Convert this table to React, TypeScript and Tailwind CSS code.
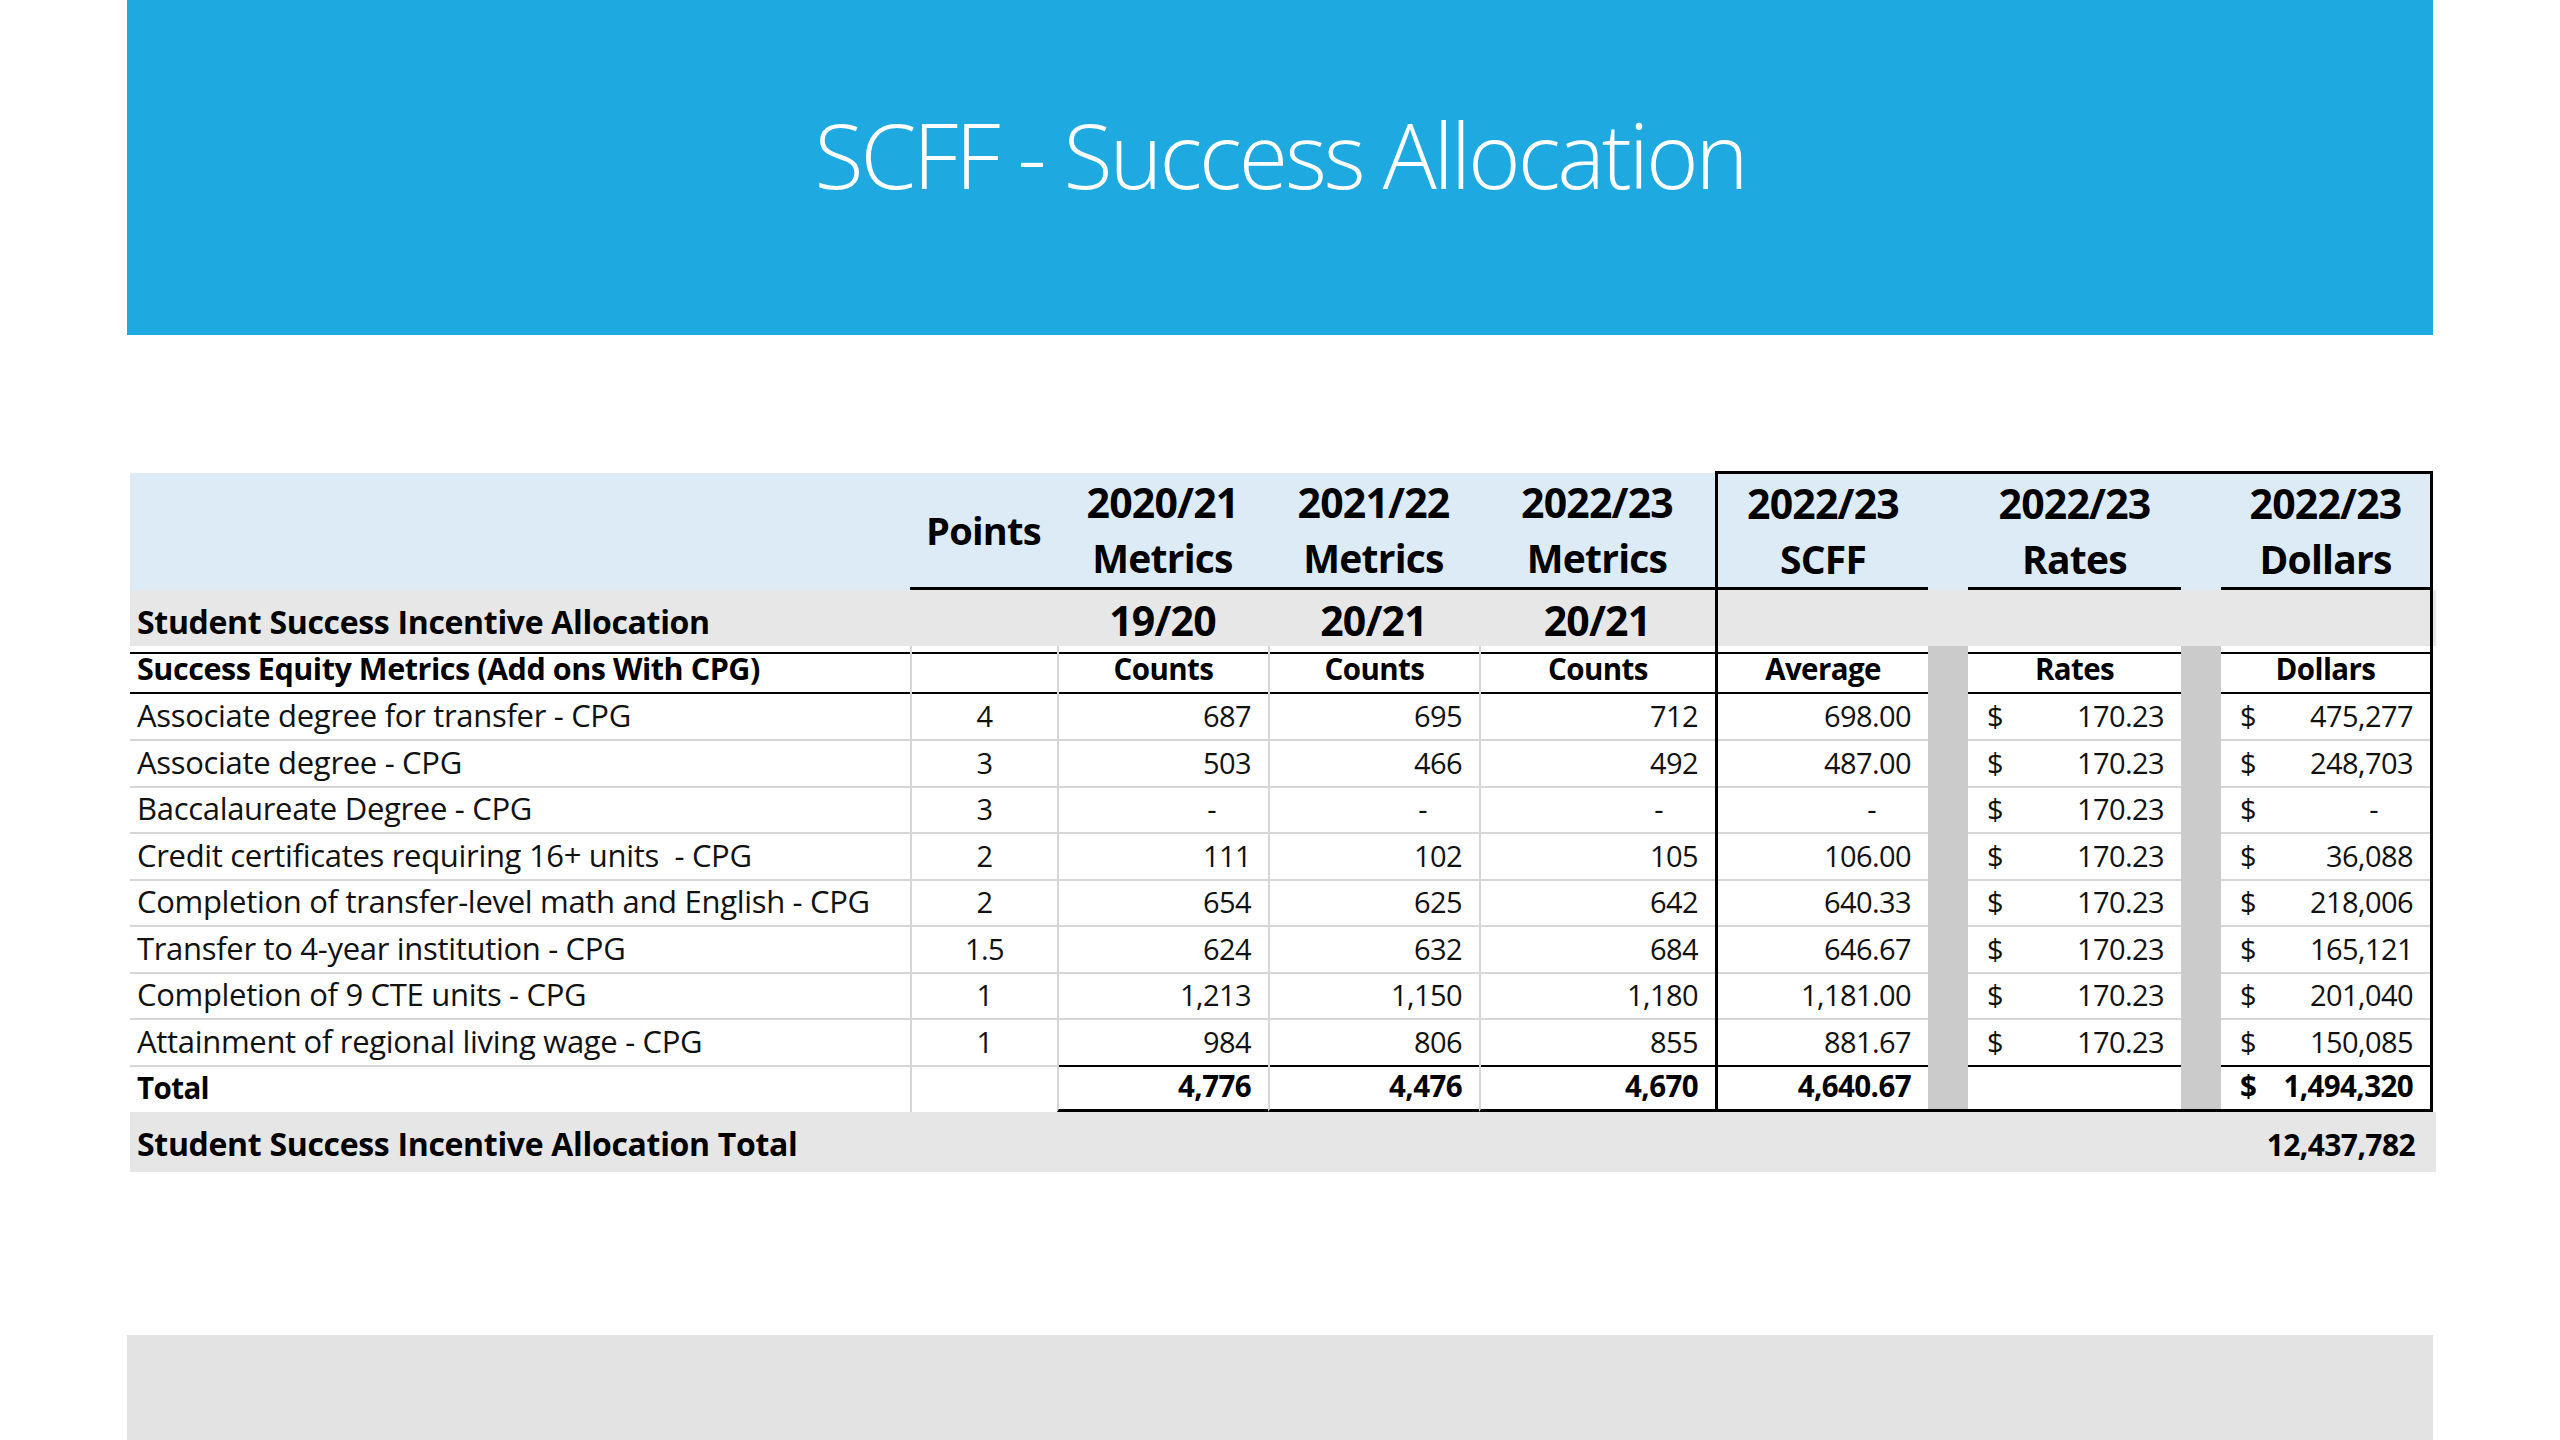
import React from "react";

const rows: string[][] = [
  ["Associate degree for transfer - CPG", "4", "687", "695", "712", "698.00", "170.23", "475,277"],
  ["Associate degree - CPG", "3", "503", "466", "492", "487.00", "170.23", "248,703"],
  ["Baccalaureate Degree - CPG", "3", "-", "-", "-", "-", "170.23", "-"],
  ["Credit certificates requiring 16+ units  - CPG", "2", "111", "102", "105", "106.00", "170.23", "36,088"],
  ["Completion of transfer-level math and English - CPG", "2", "654", "625", "642", "640.33", "170.23", "218,006"],
  ["Transfer to 4-year institution - CPG", "1.5", "624", "632", "684", "646.67", "170.23", "165,121"],
  ["Completion of 9 CTE units - CPG", "1", "1,213", "1,150", "1,180", "1,181.00", "170.23", "201,040"],
  ["Attainment of regional living wage - CPG", "1", "984", "806", "855", "881.67", "170.23", "150,085"],
];

const GRID =
  "grid grid-cols-[780px_147px_211px_211px_236px_213px_40px_213px_40px_212px]";

function Num({ v, extra }: { v: string; extra: string }) {
  if (v === "-") {
    return <div className={`flex items-center justify-end pr-[52px] ${extra}`}>-</div>;
  }
  return <div className={`flex items-center justify-end pr-[17px] ${extra}`}>{v}</div>;
}

function Money({ v, extra }: { v: string; extra: string }) {
  return (
    <div className={`flex items-center justify-between pl-[19px] ${v === "-" ? "pr-[52px]" : "pr-[17px]"} ${extra}`}>
      <span>$</span>
      <span>{v}</span>
    </div>
  );
}

function Head({ a, b, extra }: { a: string; b: string; extra: string }) {
  return (
    <div className={`flex flex-col items-center justify-center ${extra}`}>
      <span className="text-[41px] tracking-[-0.02em]">{a}</span>
      <span className="text-[39px] tracking-[-0.02em]">{b}</span>
    </div>
  );
}

export default function App() {
  const font = { fontFamily: '"Open Sans", "Noto Sans", sans-serif' };
  return (
    <div className="w-[2560px] h-[1440px] bg-white overflow-hidden" style={font}>
      <div className="ml-[127px] w-[2306px] h-[335px] bg-[#1eaae1] pt-[109px] text-center">
        <h1 className="text-[90px] leading-none font-light text-white tracking-[-0.035em]">
          SCFF - Success Allocation
        </h1>
      </div>

      <div className="ml-[130px] mt-[136px] w-[2306px] text-black">
        {/* Header row */}
        <div className={`${GRID} h-[119px] font-bold leading-[56px]`}>
          <div className="border-t-2 border-white bg-[#ddebf7]" />
          <div className="border-t-2 border-t-white bg-[#ddebf7] border-b-[3px] border-b-black flex items-center justify-center text-[38px] tracking-[-0.02em]">
            Points
          </div>
          <Head a="2020/21" b="Metrics" extra="border-t-2 border-t-white bg-[#ddebf7] border-b-[3px] border-b-black" />
          <Head a="2021/22" b="Metrics" extra="border-t-2 border-t-white bg-[#ddebf7] border-b-[3px] border-b-black" />
          <Head a="2022/23" b="Metrics" extra="border-t-2 border-t-white bg-[#ddebf7] border-b-[3px] border-b-black" />
          <Head a="2022/23" b="SCFF" extra="border-t-[3px] border-t-black border-l-[3px] border-l-black bg-[#ddebf7] border-b-[3px] border-b-black" />
          <div className="border-t-[3px] border-t-black bg-[#ddebf7]" />
          <Head a="2022/23" b="Rates" extra="border-t-[3px] border-t-black bg-[#ddebf7] border-b-[3px] border-b-black" />
          <div className="border-t-[3px] border-t-black bg-[#ddebf7]" />
          <Head a="2022/23" b="Dollars" extra="border-t-[3px] border-t-black border-r-[3px] border-r-black bg-[#ddebf7] border-b-[3px] border-b-black" />
        </div>

        {/* Gray row */}
        <div className={`${GRID} h-[56px] bg-[#e7e7e7] font-bold`}>
          <div className="border-b-2 border-black flex items-center pl-[7px] pt-[2px] text-[32px] tracking-[-0.01em]">
            Student Success Incentive Allocation
          </div>
          <div className="border-b-2 border-black" />
          <div className="border-b-2 border-black flex items-center justify-center text-[41px] tracking-[-0.02em]">19/20</div>
          <div className="border-b-2 border-black flex items-center justify-center text-[41px] tracking-[-0.02em]">20/21</div>
          <div className="border-b-2 border-black flex items-center justify-center text-[41px] tracking-[-0.02em]">20/21</div>
          <div className="border-b-2 border-b-black border-l-[3px] border-l-black" />
          <div />
          <div className="border-b-2 border-black" />
          <div />
          <div className="border-b-2 border-b-black border-r-[3px] border-r-black" />
        </div>

        {/* Counts row */}
        <div className={`${GRID} h-[46px] bg-white font-bold text-[29.5px] tracking-[-0.02em]`}>
          <div className="border-b-2 border-black flex items-center pl-[7px] text-[30.5px] tracking-[-0.015em]">
            Success Equity Metrics (Add ons With CPG)
          </div>
          <div className="border-b-2 border-b-black border-l-2 border-l-[#d6d6d6]" />
          <div className="border-b-2 border-b-black border-l-2 border-l-[#d6d6d6] flex items-center justify-center">Counts</div>
          <div className="border-b-2 border-b-black border-l-2 border-l-[#d6d6d6] flex items-center justify-center">Counts</div>
          <div className="border-b-2 border-b-black border-l-2 border-l-[#d6d6d6] flex items-center justify-center">Counts</div>
          <div className="border-b-2 border-b-black border-l-[3px] border-l-black flex items-center justify-center">Average</div>
          <div className="bg-[#cbcbcb]" />
          <div className="border-b-2 border-black flex items-center justify-center">Rates</div>
          <div className="bg-[#cbcbcb]" />
          <div className="border-b-2 border-b-black border-r-[3px] border-r-black flex items-center justify-center">Dollars</div>
        </div>

        {/* Data rows */}
        {rows.map((r, i) => {
          const last = i === rows.length - 1;
          const h = i % 2 === 0 ? "h-[47px]" : "h-[46px]";
          const gb = "border-b-2 border-b-[#d6d6d6]";
          const kb = last ? "border-b-2 border-b-black" : "border-b-2 border-b-[#d6d6d6]";
          return (
            <div key={i} className={`${GRID} ${h} bg-white text-[29px] tracking-[-0.02em] text-[#111]`}>
              <div className={`${gb} flex items-center pl-[7px] whitespace-pre text-[31px] tracking-[-0.01em]`}>{r[0]}</div>
              <div className={`${gb} border-l-2 border-l-[#d6d6d6] flex items-center justify-center`}>{r[1]}</div>
              <Num v={r[2]} extra={`${kb} border-l-2 border-l-[#d6d6d6]`} />
              <Num v={r[3]} extra={`${kb} border-l-2 border-l-[#d6d6d6]`} />
              <Num v={r[4]} extra={`${kb} border-l-2 border-l-[#d6d6d6]`} />
              <Num v={r[5]} extra={`${kb} border-l-[3px] border-l-black`} />
              <div className="bg-[#cbcbcb]" />
              <Money v={r[6]} extra={kb} />
              <div className="bg-[#cbcbcb]" />
              <Money v={r[7]} extra={`${kb} border-r-[3px] border-r-black`} />
            </div>
          );
        })}

        {/* Total row */}
        <div className={`${GRID} h-[48px] bg-white text-[29.5px] tracking-[-0.02em] font-bold`}>
          <div className="flex items-center pl-[7px]">Total</div>
          <div className="border-l-2 border-l-[#d6d6d6]" />
          <Num v="4,776" extra="border-b-[3px] border-b-black border-l-2 border-l-[#d6d6d6]" />
          <Num v="4,476" extra="border-b-[3px] border-b-black border-l-2 border-l-[#d6d6d6]" />
          <Num v="4,670" extra="border-b-[3px] border-b-black border-l-2 border-l-[#d6d6d6]" />
          <Num v="4,640.67" extra="border-b-[3px] border-b-black border-l-[3px] border-l-black" />
          <div className="bg-[#cbcbcb] border-b-[3px] border-b-black" />
          <div className="border-b-[3px] border-b-black" />
          <div className="bg-[#cbcbcb] border-b-[3px] border-b-black" />
          <Money v="1,494,320" extra="border-b-[3px] border-b-black border-r-[3px] border-r-black" />
        </div>

        {/* Grand total */}
        <div className="h-[60px] bg-[#e6e6e6] flex items-center justify-between pl-[7px] pr-[21px] pt-[4px] font-bold">
          <span className="text-[32px] tracking-[-0.01em]">Student Success Incentive Allocation Total</span>
          <span className="text-[30px] tracking-[-0.02em]">12,437,782</span>
        </div>
      </div>

      <div className="ml-[127px] mt-[163px] w-[2306px] h-[105px] bg-[#e3e3e3]" />
    </div>
  );
}
